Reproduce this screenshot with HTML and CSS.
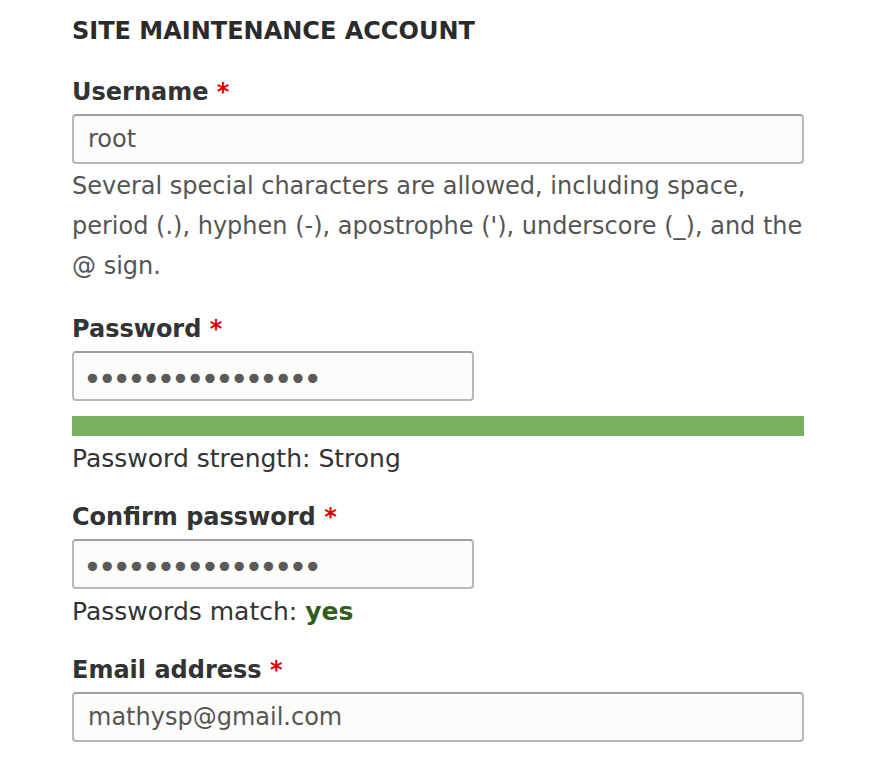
FILE: index.html
```html
<!DOCTYPE html>
<html lang="en">
<head>
<meta charset="utf-8">
<title>Site maintenance account</title>
<link rel="stylesheet" href="styles.css">
</head>
<body>
<fieldset class="account">
  <legend class="account-title">Site maintenance account</legend>

  <div class="field">
    <label class="field-label" for="name">Username <span class="req">*</span></label>
    <input class="field-input" id="name" type="text" value="root">
    <div class="field-desc">Several special characters are allowed, including space, period (.), hyphen (-), apostrophe ('), underscore (_), and the @ sign.</div>
  </div>

  <div class="field">
    <label class="field-label" for="pass1">Password <span class="req">*</span></label>
    <input class="field-input field-input--secret" id="pass1" type="password" value="abcdefghijklmnop">
    <div class="strength-bar"><div class="strength-fill" style="width:100%"></div></div>
    <div class="field-status">Password strength: Strong</div>
  </div>

  <div class="field">
    <label class="field-label" for="pass2">Confirm password <span class="req">*</span></label>
    <input class="field-input field-input--secret" id="pass2" type="password" value="abcdefghijklmnop">
    <div class="field-status">Passwords match: <span class="ok">yes</span></div>
  </div>

  <div class="field">
    <label class="field-label" for="mail">Email address <span class="req">*</span></label>
    <input class="field-input" id="mail" type="email" value="mathysp@gmail.com">
  </div>
</fieldset>
</body>
</html>
```

FILE: styles.css
```css
html, body {
  margin: 0;
  padding: 0;
  background: #ffffff;
}

body {
  font-family: "DejaVu Sans", "Open Sans", sans-serif;
  color: #333333;
  padding: 13px 0 0 72px;
}

.account {
  border: 0;
  margin: 0;
  padding: 0;
  width: 732px;
  min-width: 0;
}

.account-title {
  padding: 0;
  margin: 0;
  font-size: 24px;
  line-height: 36px;
  font-weight: 700;
  text-transform: uppercase;
  color: #2b2b2b;
}

.field {
  display: flex;
  flex-direction: column;
  align-items: flex-start;
  margin-top: 27px;
}

.field-label {
  font-size: 24px;
  line-height: 32px;
  font-weight: 700;
  color: #333333;
  margin-bottom: 6px;
}

.req {
  color: #e00000;
  font-weight: 700;
}

.field-input {
  box-sizing: border-box;
  width: 732px;
  height: 50px;
  margin: 0;
  padding: 0 14px;
  font-family: "DejaVu Sans", "Open Sans", sans-serif;
  font-size: 24px;
  color: #555555;
  background: #fcfcfa;
  border: 2px solid #b8b8b8;
  border-top-color: #a0a0a0;
  border-radius: 4px;
  outline: none;
}

.field-input--secret {
  width: 402px;
  padding: 5px 9px 0;
  font-size: 32px;
  letter-spacing: -4.2px;
  color: #5a5a5a;
}

.field-desc {
  margin-top: 2px;
  font-size: 24px;
  line-height: 40px;
  color: #555555;
  width: 732px;
}

.strength-bar {
  margin-top: 15px;
  width: 732px;
  height: 20px;
  background: #dddddd;
}

.strength-fill {
  height: 100%;
  background: #77b05f;
}

.field-status {
  font-size: 25px;
  line-height: 30px;
  color: #333333;
  margin-top: 8px;
}

.ok {
  color: #325e1c;
  font-weight: 700;
}
```
